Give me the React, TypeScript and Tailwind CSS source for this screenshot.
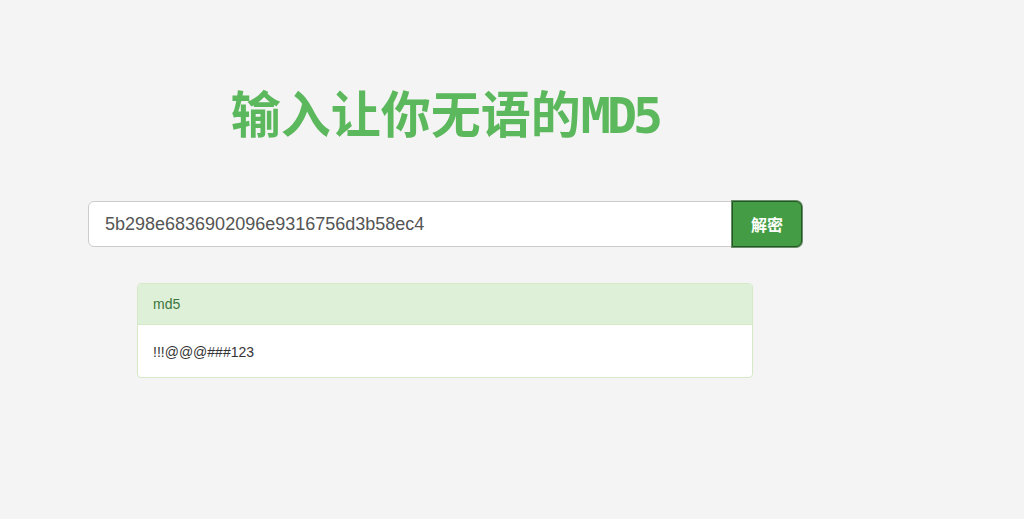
export default function App() {
  return (
    <div className="min-h-[519px] w-full bg-[#f4f4f4] font-['Liberation_Sans','Noto_Sans_CJK_SC',sans-serif]">
      <div className="ml-[88px] flex w-[714px] flex-col items-center pt-[76px]">
        <h1 className="h-[70px] font-['Noto_Sans_CJK_SC',sans-serif] text-[50px] font-bold leading-[70px] text-[#5cb85c]">
          输入让你无语的
          <span className="font-['DejaVu_Sans_Mono',monospace] tracking-[-4px]">MD5</span>
        </h1>

        <div className="mt-[55px] flex h-[46px] w-full">
          <input
            readOnly
            value="5b298e6836902096e9316756d3b58ec4"
            className="h-full flex-1 rounded-l-[6px] border border-[#ccc] bg-white px-4 text-[18px] text-[#555] outline-none"
          />
          <button className="h-full w-[70px] rounded-r-[6px] border border-[#255625] bg-[#449d44] font-['Noto_Sans_CJK_SC',sans-serif] text-[16px] font-bold text-white ring-1 ring-[#6b8e6b]">
            解密
          </button>
        </div>

        <div className="mt-[36px] w-[616px] overflow-hidden rounded-[4px] border border-[#d6e9c6] bg-white">
          <div className="border-b border-[#d6e9c6] bg-[#dff0d8] px-[15px] py-[10px] text-[14px] leading-[20px] text-[#3c763d]">
            md5
          </div>
          <div className="px-[15px] pt-[17px] pb-[15px] text-[14px] leading-[20px] text-[#333]">!!!@@@###123</div>
        </div>
      </div>
    </div>
  );
}
